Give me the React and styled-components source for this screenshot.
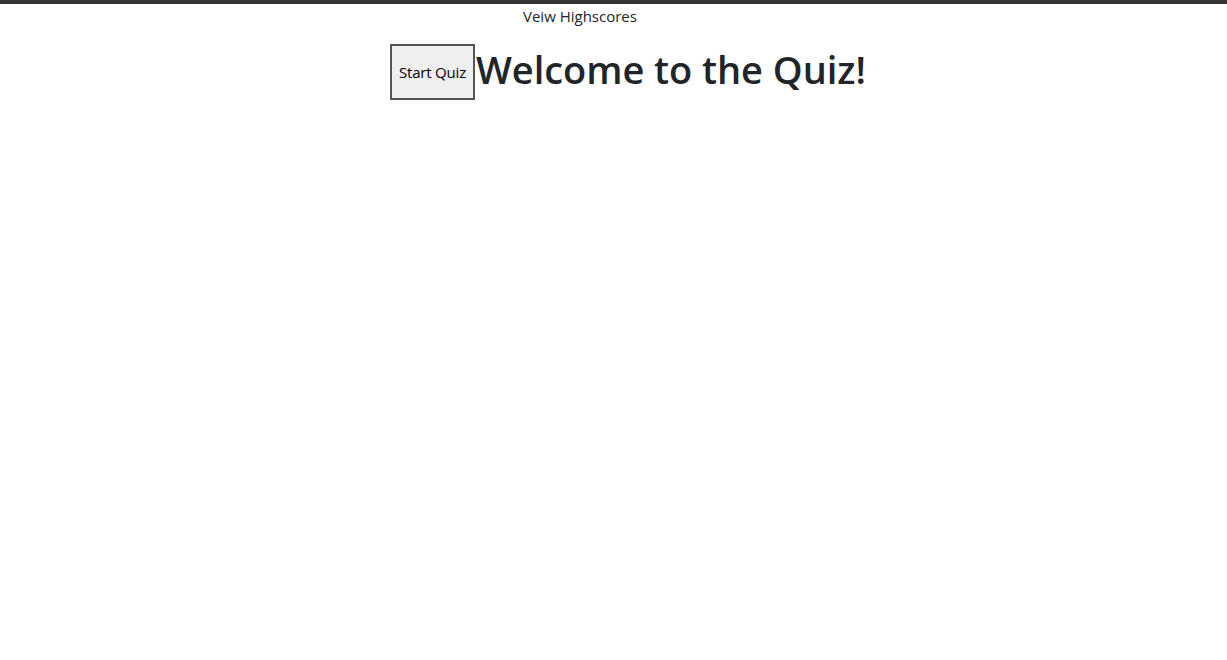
import { createGlobalStyle, styled } from "styled-components";

const Global = createGlobalStyle`
  html, body {
    margin: 0;
    background: #fff;
    font-family: "Open Sans", "Noto Sans", sans-serif;
    color: #212529;
  }
`;

const TopBar = styled.div`
  height: 4px;
  background: #333333;
`;

const Nav = styled.nav`
  display: flex;
  padding-left: 523px;
  height: 23px;
  align-items: center;
`;

const NavLink = styled.a`
  font-size: 15px;
  color: #212529;
  text-decoration: none;
  cursor: pointer;
`;

const Hero = styled.div`
  display: flex;
  align-items: center;
  padding-left: 390px;
  margin-top: 17px;
`;

const StartButton = styled.button`
  flex: none;
  width: 85px;
  height: 56px;
  padding: 0;
  border: 2px solid #555;
  background: #efefef;
  font-family: "Open Sans", "Noto Sans", sans-serif;
  font-size: 15px;
  letter-spacing: -0.2px;
  color: #000;
`;

const Title = styled.h1`
  margin: -5px 0 0 1px;
  font-size: 38px;
  font-weight: 600;
  line-height: 1.2;
  letter-spacing: -0.05px;
  color: #212529;
`;

export default function App() {
  return (
    <>
      <Global />
      <TopBar />
      <Nav>
        <NavLink>Veiw Highscores</NavLink>
      </Nav>
      <Hero>
        <StartButton>Start Quiz</StartButton>
        <Title>Welcome to the Quiz!</Title>
      </Hero>
    </>
  );
}
